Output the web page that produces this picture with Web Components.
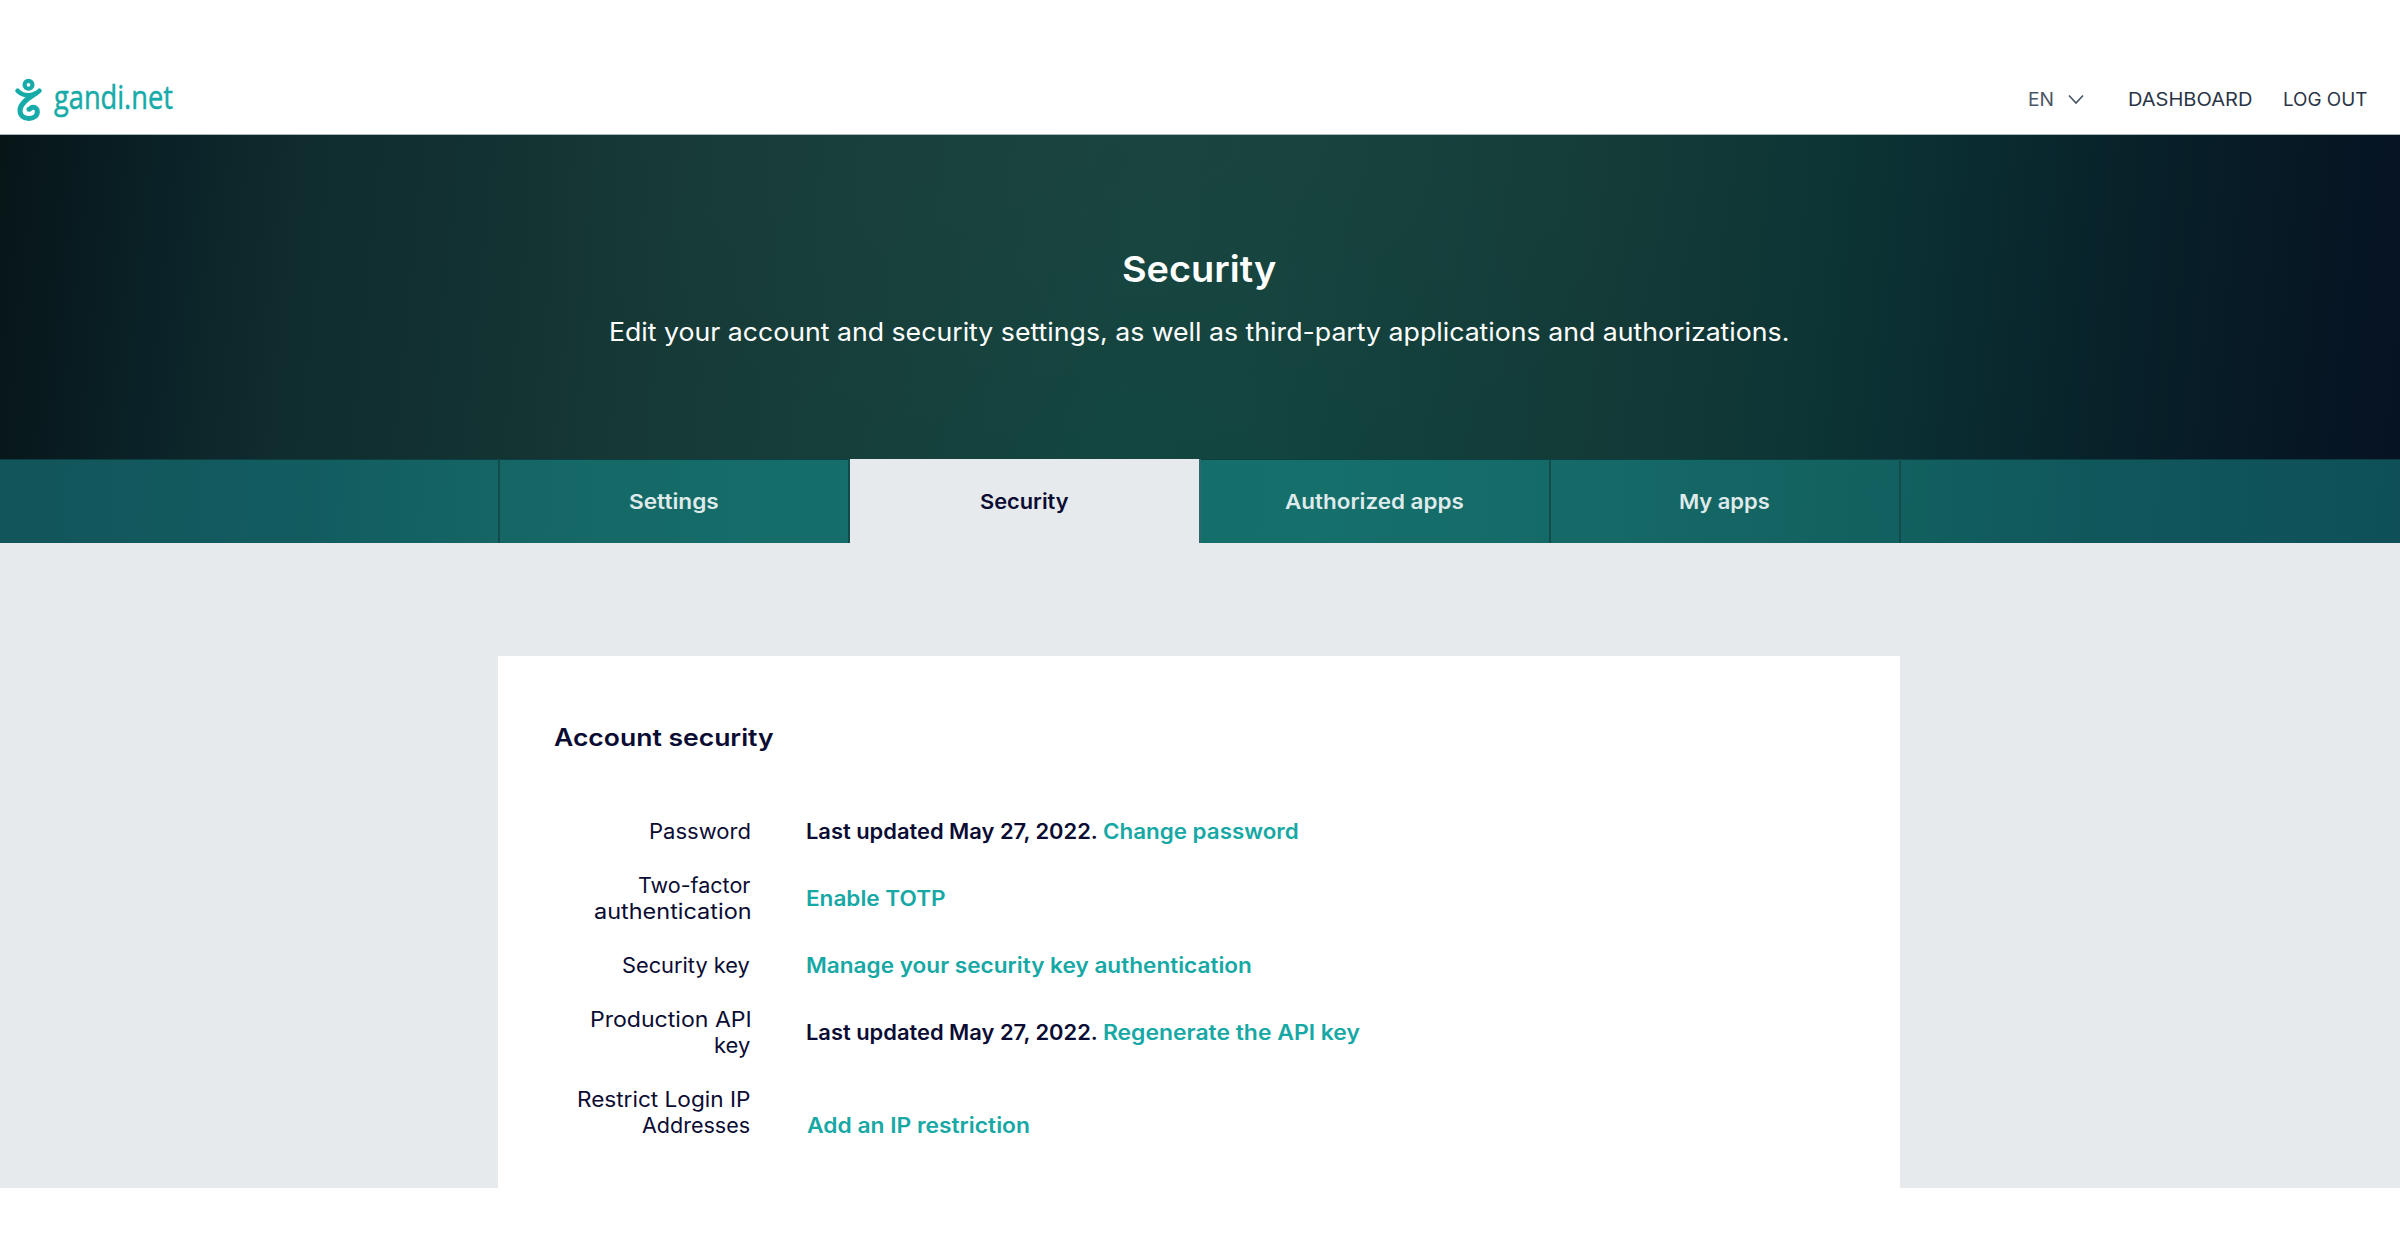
<!DOCTYPE html>
<html lang="en">
<head>
<meta charset="utf-8">
<title>Security</title>
<style>
html,body{margin:0;padding:0;background:#fff}
body{font-family:Inter,"Noto Sans",sans-serif;color:#0a0c33;width:2400px;height:1260px;overflow:hidden}
</style>
</head>
<body>
<gandi-page></gandi-page>
<script>
const define = (name, html, setup) => customElements.define(name, class extends HTMLElement {
  connectedCallback() {
    if (this.shadowRoot) return;
    const t = document.createElement('template');
    t.innerHTML = html;
    this.attachShadow({mode: 'open'}).append(document.importNode(t.content, true));
    if (setup) setup(this);
  }
});

// Single line of text stretched so that its ink fills the width given in "w".
define('fit-text', `<style>
:host{display:block;flex:none;white-space:nowrap}
span{display:inline-block;transform-origin:0 50%}
</style><span><slot></slot></span>`, host => {
  const w = +host.getAttribute('w');
  const cs = getComputedStyle(host);
  const c = document.createElement('canvas').getContext('2d');
  c.font = `${cs.fontWeight} ${cs.fontSize} ${cs.fontFamily}`;
  const m = c.measureText(host.textContent);
  const s = w / (m.actualBoundingBoxRight + m.actualBoundingBoxLeft);
  host.style.width = w + 'px';
  const span = host.shadowRoot.querySelector('span');
  span.style.transform = `translateX(${m.actualBoundingBoxLeft * s}px) scaleX(${s})`;
});

define('gandi-logo', `<style>
:host{display:flex;align-items:flex-start;color:#16aaa8}
svg{display:block;width:28px;height:45px;flex:none;margin:9px 11px 0 0}
fit-text{font:400 33.5px/40px "Open Sans",sans-serif;margin-top:8px;-webkit-text-stroke:.5px #16aaa8}
</style>
<svg viewBox="45 50 84 135" fill="none" stroke="currentColor" stroke-linecap="round" stroke-linejoin="round">
<circle cx="85.500" cy="73.500" r="11.800" stroke-width="12.500"/>
<path d="M53 91.500C62 100 73 105 84 105C96 105 109 100 118 91.500" stroke-width="14"/>
<path d="M106 100C91 110 60 127 60 150C60 166 71 174.500 86 174.500C101 174.500 112 166 112 154C112 145 106 140 98 141C92 141 91 147 87 147" stroke-width="15"/>
</svg>
<fit-text w="119">gandi.net</fit-text>`);

define('site-header', `<style>
:host{display:flex;justify-content:space-between;box-sizing:border-box;height:75px;padding:8px 32.500px 0 15px;border-bottom:1px solid #a9b8b8;background:#fff}
nav{display:flex;align-items:center;height:24px;margin-top:19px;font-size:18.500px;line-height:24px;color:#2a3547}
.en{color:#4c5566}
svg{width:16px;height:11px;margin:0 45px 0 15px;display:block}
fit-text + fit-text{margin-left:32px}
</style>
<gandi-logo></gandi-logo>
<nav><fit-text class="en" w="24">EN</fit-text>
<svg viewBox="0 0 16 11" fill="none" stroke="#4c5566" stroke-width="1.700"><path d="M1 1.500L8 9L15 1.500"/></svg>
<fit-text w="123">DASHBOARD</fit-text><fit-text w="83.500">LOG OUT</fit-text></nav>`);

define('page-hero', `<style>
:host{display:flex;flex-direction:column;align-items:center;box-sizing:border-box;height:324px;padding-right:2px;color:#fff}
.t{font-size:36px;font-weight:600;line-height:48px;margin-top:110px}
.s{font-size:25.200px;line-height:36px;margin-top:21px}
</style>
<fit-text class="t" w="153">Security</fit-text>
<fit-text class="s" w="1177">Edit your account and security settings, as well as third-party applications and authorizations.</fit-text>`);

define('tab-item', `<style>
:host{display:flex;flex:1;justify-content:center;align-items:center;box-sizing:border-box;height:84px;padding-top:2px;border-left:2px solid #124b4c;font-weight:600;font-size:20.500px;line-height:28px;color:#dfeaea}
:host([last]){border-right:2px solid #124b4c;margin-right:-1px}
:host([active]){background:#e6eaed;color:#0a0c33}
:host([after]){border-left-color:#30666a}
</style><slot></slot>`);

define('tab-bar', `<style>
:host{display:flex;justify-content:center;box-sizing:border-box;height:84px;padding-right:2px;box-shadow:inset 0 1px 0 #0b3f42;background:linear-gradient(93deg,#12555b 0%,#125c60 13%,#156765 22%,#156d6a 33%,#13706c 45%,#156f6b 55%,#156967 67%,#12605f 79%,#10575c 87%,#0f5058 100%)}
div{display:flex;width:1402px}
</style><div>
<tab-item><fit-text w="89.500">Settings</fit-text></tab-item>
<tab-item active><fit-text w="88.500">Security</fit-text></tab-item>
<tab-item after><fit-text w="178.500">Authorized apps</fit-text></tab-item>
<tab-item last><fit-text w="89.500">My apps</fit-text></tab-item>
</div>`);

define('info-row', `<style>
:host{display:grid;grid-template-columns:196px 1fr;column-gap:57px;align-items:center;font-size:21px;line-height:26px}
:host([end]){align-items:end}
.l{display:flex;flex-direction:column;align-items:flex-end}
.v{display:flex;gap:7px;font-weight:600}
</style><div class="l"><slot name="label"></slot></div><div class="v"><slot></slot></div>`);

define('security-card', `<style>
:host{display:block;box-sizing:border-box;width:1402px;height:532px;padding:62px 56px 0;background:#fff}
h2{margin:0 0 61px;font-size:24px;font-weight:600;line-height:40px}
.rows{display:flex;flex-direction:column;gap:28px}
.teal{color:#16a8a5}
</style>
<h2><fit-text w="219.500">Account security</fit-text></h2>
<div class="rows">
<info-row><fit-text slot="label" w="100">Password</fit-text><fit-text w="289.500">Last updated May 27, 2022.</fit-text><fit-text class="teal" w="193.500">Change password</fit-text></info-row>
<info-row><fit-text slot="label" w="111.500">Two-factor</fit-text><fit-text slot="label" w="156">authentication</fit-text><fit-text class="teal" w="138">Enable TOTP</fit-text></info-row>
<info-row><fit-text slot="label" w="127">Security key</fit-text><fit-text class="teal" w="444">Manage your security key authentication</fit-text></info-row>
<info-row><fit-text slot="label" w="159">Production API</fit-text><fit-text slot="label" w="35.500">key</fit-text><fit-text w="289.500">Last updated May 27, 2022.</fit-text><fit-text class="teal" w="255.500">Regenerate the API key</fit-text></info-row>
<info-row end><fit-text slot="label" w="172">Restrict Login IP</fit-text><fit-text slot="label" w="108">Addresses</fit-text><fit-text class="teal" w="222">Add an IP restriction</fit-text></info-row>
</div>`);

define('gandi-page', `<style>
:host{display:flex;flex-direction:column;box-sizing:border-box;width:2400px;height:1260px;padding-top:60px;background:#fff}
.banner{background:radial-gradient(ellipse 620px 330px at 1130px 0,rgba(34,66,60,.45),transparent),linear-gradient(96deg,#071517 0%,#08191d 2.500%,#0a2227 7%,#102c2e 12.500%,#133232 21%,#163936 27%,#163f3b 36%,#134641 47%,#134540 52%,#12403c 59%,#133a37 67%,#0d3535 75%,#0a2c31 81%,#08222a 87%,#071a25 93%,#061423 98%,#061322 100%)}
main{display:flex;justify-content:center;align-items:flex-start;box-sizing:border-box;height:645px;padding:113px 2px 0 0;background:#e6eaed}
</style>
<site-header></site-header>
<div class="banner"><page-hero></page-hero><tab-bar></tab-bar></div>
<main><security-card></security-card></main>`);
</script>
</body>
</html>
